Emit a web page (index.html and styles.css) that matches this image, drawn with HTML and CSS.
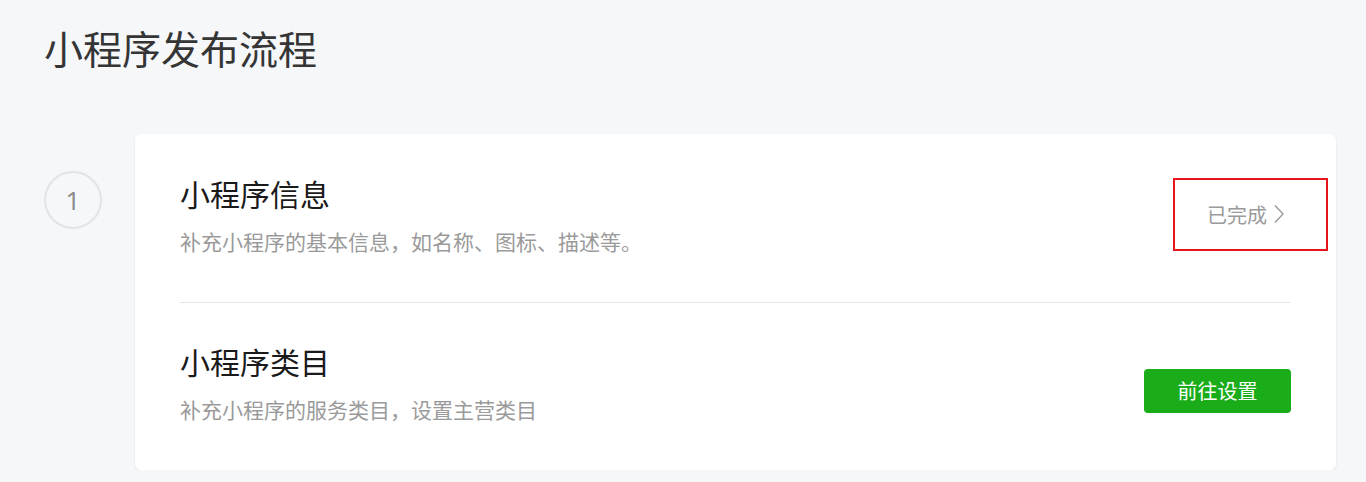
FILE: index.html
```html
<!DOCTYPE html>
<html lang="zh-CN">
<head>
<meta charset="UTF-8">
<meta name="viewport" content="width=device-width, initial-scale=1.0">
<title>小程序发布流程</title>
<link rel="stylesheet" href="styles.css">
</head>
<body>

<div class="page">
  <h1 class="page-title">小程序发布流程</h1>

  <div class="step">
    <div class="step-num">1</div>

    <div class="card">
      <div class="row">
        <div class="row-text">
          <div class="row-title">小程序信息</div>
          <div class="row-desc">补充小程序的基本信息，如名称、图标、描述等。</div>
        </div>
        <a href="#" class="status">已完成
          <svg class="chevron" width="12" height="20" viewBox="0 0 12 20"><path d="M2 1.5 L10 10 L2 18.5" fill="none" stroke="#9a9a9a" stroke-width="1.4"/></svg>
        </a>
      </div>

      <div class="row">
        <div class="row-text">
          <div class="row-title">小程序类目</div>
          <div class="row-desc">补充小程序的服务类目，设置主营类目</div>
        </div>
        <a href="#" class="button">前往设置</a>
      </div>
    </div>
  </div>
</div>

</body>
</html>
```

FILE: styles.css
```css
body {
  margin: 0;
  background-color: #f6f7f9;
  font-family: "Noto Sans CJK SC", "Noto Sans", sans-serif;
}

.page {
  padding: 20px 30px 0 44px;
}

.page-title {
  font-size: 39px;
  font-weight: 400;
  color: #353535;
  margin: 0;
  line-height: 54px;
}

.step {
  display: flex;
  gap: 33px;
  margin-top: 60px;
}

.step-num {
  width: 54px;
  height: 54px;
  border: 2px solid #e3e4e6;
  border-radius: 50%;
  color: #888888;
  font-family: "Open Sans", sans-serif;
  font-size: 26px;
  display: flex;
  justify-content: center;
  align-items: center;
  margin-top: 37px;
  flex-shrink: 0;
}

.card {
  flex: 1;
  background-color: #FFFFFF;
  border-radius: 6px;
  box-shadow: 0 1px 3px rgba(0, 0, 0, 0.08);
  padding: 0 45px;
}

.row {
  display: flex;
  justify-content: space-between;
  align-items: center;
  height: 168px;
  padding-bottom: 8px;
  box-sizing: border-box;
}

.row + .row {
  border-top: 1px solid #e7e7e7;
}

.row-title {
  font-size: 30px;
  color: #1a1a1a;
  line-height: 40px;
}

.row-desc {
  font-size: 21px;
  color: #9a9a9a;
  line-height: 30px;
  margin-top: 13px;
}

.status {
  display: flex;
  align-items: center;
  gap: 6px;
  color: #9a9a9a;
  font-size: 20px;
  text-decoration: none;
  border: 2px solid #e8141c;
  padding-left: 32px;
  box-sizing: border-box;
  width: 155px;
  height: 73px;
  margin-right: -37px;
  margin-top: 0;
}

.button {
  background-color: #1aad19;
  color: #FFFFFF;
  font-size: 20px;
  text-decoration: none;
  border-radius: 4px;
  width: 147px;
  height: 44px;
  display: flex;
  justify-content: center;
  align-items: center;
  margin-top: 16px;
}
```
